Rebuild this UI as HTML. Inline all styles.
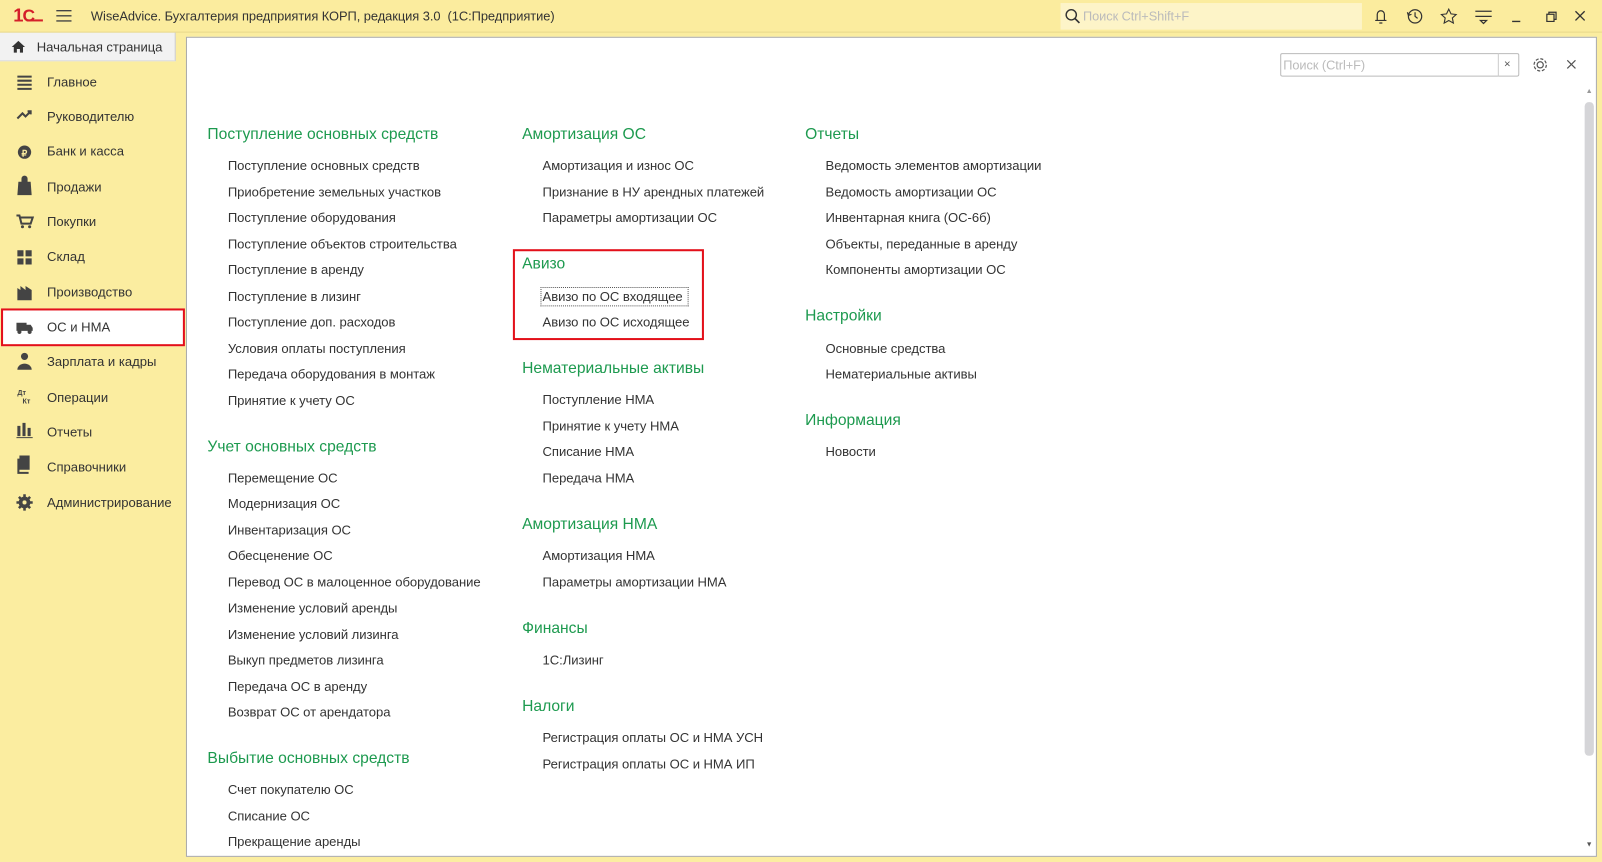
<!DOCTYPE html>
<html><head><meta charset="utf-8"><style>
*{margin:0;padding:0;box-sizing:border-box}
html,body{width:1602px;height:862px;overflow:hidden;background:#fff;font-family:"Liberation Sans",Arial,sans-serif;color:#333}
#w{position:absolute;left:0;top:0;width:1568px;height:844px;transform:scale(1.0217,1.0213);transform-origin:0 0;background:#fbeda0}
.a{position:absolute;white-space:nowrap}
.t{font-size:12.8px;letter-spacing:-0.05px;color:#333;transform:translateY(-50%)}
.h{font-size:15.3px;color:#1d9a4f;transform:translateY(-50%)}
.si{font-size:12.8px;color:#333;transform:translateY(-50%)}
</style></head><body><div id="w">
<div class="a" style="left:0;top:0;width:1568px;height:32px;background:#fbec9e;border-bottom:1px solid #e6d68a"></div>
<div class="a" style="left:13px;top:5px;font:bold 18px 'Liberation Sans';color:#d4202a;letter-spacing:-1px">1<span style="font-size:17px">C</span></div>
<div class="a" style="left:26px;top:19px;width:16px;height:2px;background:#d4202a"></div>
<svg class="a" style="left:55px;top:9px" width="15" height="13"><path d="M0 1.5H15M0 6.5H15M0 11.5H15" stroke="#444" stroke-width="1.3"/></svg>
<div class="a t" style="left:89px;top:16px;font-size:12.6px">WiseAdvice. Бухгалтерия предприятия КОРП, редакция 3.0&nbsp; (1С:Предприятие)</div>
<div class="a" style="left:1038px;top:3px;width:295px;height:26px;background:#fdf4c8"></div>
<svg class="a" style="left:1042px;top:8px" width="16" height="16"><circle cx="6.5" cy="6.5" r="5" fill="none" stroke="#333" stroke-width="1.4"/><path d="M10 10L14.5 14.5" stroke="#333" stroke-width="1.6"/></svg>
<div class="a t" style="left:1060px;top:16px;color:#bbb;font-size:12.5px">Поиск Ctrl+Shift+F</div>
<svg class="a" style="left:1343px;top:7px" width="220" height="18">
<path d="M3 13h11M5 13V7a3.5 3.5 0 0 1 7 0v6M7 15.5h3" fill="none" stroke="#333" stroke-width="1.2"/>
<circle cx="42" cy="9" r="6.5" fill="none" stroke="#333" stroke-width="1.2"/><path d="M42 5v4l2.5 2M34.5 5l1 3 3-1" fill="none" stroke="#333" stroke-width="1.2"/>
<path d="M75 2l2.2 4.6 5 .6-3.7 3.4 1 5-4.5-2.5-4.5 2.5 1-5-3.7-3.4 5-.6z" fill="none" stroke="#333" stroke-width="1.1"/>
<path d="M101 4h16M101 9h16M106 13h6l-3 3z" fill="none" stroke="#333" stroke-width="1.2"/>
<path d="M137 14h8" stroke="#333" stroke-width="1.3"/>
<path d="M171 7h7v7h-7zM173 7V5h7v7h-2" fill="none" stroke="#333" stroke-width="1.2"/>
<path d="M199 4l9 9M208 4l-9 9" stroke="#333" stroke-width="1.3"/>
</svg>
<div class="a" style="left:0;top:32px;width:172px;height:28px;background:#f2f2f2;border-right:1px solid #ccc;border-bottom:1px solid #ddd"></div>
<svg class="a" style="left:11px;top:39px" width="14" height="13"><path d="M7 1L0.5 7H2.5V12.5H5.5V9H8.5V12.5H11.5V7H13.5z" fill="#333"/></svg>
<div class="a t" style="left:36px;top:46px">Начальная страница</div>
<div class="a" style="left:172px;top:32px;width:1396px;height:4px;background:#fbeda0"></div>
<div class="a" style="left:1px;top:302px;width:180px;height:37px;background:#fff;border:2px solid #e3101a"></div>
<svg class="a" style="left:16px;top:72px" width="18" height="440" fill="#444">
<path d="M1 2h14v2H1zM1 6h14v2H1zM1 10h14v2H1zM1 14h14v2H1z"/>
<path d="M1 44l5-5 3 3 5-5M11 37h3v3" fill="none" stroke="#444" stroke-width="2"/>
<circle cx="8" cy="77" r="6.5"/><text x="5" y="81" font-size="9" font-weight="bold" fill="#fbeda0" font-family="Liberation Sans">₽</text>
<path d="M2 106h12l1 13H1zM5 106v-3a3 3 0 0 1 6 0v3" />
<path d="M0 139h3l2 8h9l2-6H4" fill="none" stroke="#444" stroke-width="2"/><circle cx="6" cy="150" r="1.5"/><circle cx="13" cy="150" r="1.5"/>
<path d="M1 173h6v6H1zM9 173h6v6H9zM1 181h6v6H1zM9 181h6v6H9z"/>
<path d="M1 222V210l3 2v-4l5 4v-4l6 4v10z"/>
<path d="M0 244h10v8H0zM10 246h4l2 3v3h-6z"/><circle cx="3" cy="253" r="2"/><circle cx="13" cy="253" r="2"/>
<circle cx="8" cy="277" r="3.5"/><path d="M1 290a7 6 0 0 1 14 0z"/>
<text x="1" y="315" font-size="7" font-family="Liberation Sans" font-weight="bold">Дт</text><text x="6" y="323" font-size="7" font-family="Liberation Sans" font-weight="bold">Кт</text>
<path d="M1 345h3v10H1zM6 342h3v13H6zM11 347h3v8h-3zM0 356h16v1H0z"/>
<path d="M3 374h10v14H3zM1 377h2v13h9v2H1z"/>
<circle cx="8" cy="420" r="4.5" fill="none" stroke="#444" stroke-width="2.5"/><path d="M8 412v16M0 420h16M2.5 414.5l11 11M13.5 414.5l-11 11" stroke="#444" stroke-width="2.5"/><circle cx="8" cy="420" r="2" fill="#fbeda0"/>
</svg>
<div class="a si" style="left:46px;top:80px">Главное</div>
<div class="a si" style="left:46px;top:114px">Руководителю</div>
<div class="a si" style="left:46px;top:148px">Банк и касса</div>
<div class="a si" style="left:46px;top:183px">Продажи</div>
<div class="a si" style="left:46px;top:217px">Покупки</div>
<div class="a si" style="left:46px;top:251px">Склад</div>
<div class="a si" style="left:46px;top:286px">Производство</div>
<div class="a si" style="left:46px;top:320px">ОС и НМА</div>
<div class="a si" style="left:46px;top:354px">Зарплата и кадры</div>
<div class="a si" style="left:46px;top:389px">Операции</div>
<div class="a si" style="left:46px;top:423px">Отчеты</div>
<div class="a si" style="left:46px;top:457px">Справочники</div>
<div class="a si" style="left:46px;top:492px">Администрирование</div>
<div class="a" style="left:182px;top:36px;width:1381px;height:803px;background:#fff;border:1px solid #aaa"></div>
<div class="a" style="left:1253px;top:52px;width:234px;height:23px;border:1px solid #bbb;border-radius:2px;background:#fff"></div>
<div class="a" style="left:1466px;top:52px;width:1px;height:23px;background:#ccc"></div>
<div class="a t" style="left:1256px;top:64px;color:#bbb;font-size:12.5px">Поиск (Ctrl+F)</div>
<div class="a t" style="left:1472px;top:63px;font-size:11px;color:#555">×</div>
<svg class="a" style="left:1499px;top:55px" width="17" height="17"><circle cx="8.5" cy="8.5" r="3" fill="none" stroke="#555" stroke-width="1.2"/><circle cx="8.5" cy="8.5" r="6" fill="none" stroke="#555" stroke-width="1.2" stroke-dasharray="3 1.7"/></svg>
<svg class="a" style="left:1533px;top:58px" width="10" height="10"><path d="M1 1l8 8M9 1l-8 8" stroke="#555" stroke-width="1.2"/></svg>
<div class="a" style="left:1551px;top:100px;width:9px;height:640px;background:#d5d5d8;border-radius:4px"></div>
<div class="a" style="left:1552px;top:86px;font-size:7px;color:#999">▲</div>
<div class="a" style="left:1552px;top:824px;font-size:7px;color:#555">▼</div>
<div class="a" style="left:502px;top:244px;width:187px;height:89px;border:2px solid #e3101a"></div>
<div class="a" style="left:529px;top:281px;width:145px;height:19px;border:1px dotted #555"></div>

<div class="a h" style="left:203px;top:132px">Поступление основных средств</div>
<div class="a t" style="left:223px;top:162px">Поступление основных средств</div>
<div class="a t" style="left:223px;top:188px">Приобретение земельных участков</div>
<div class="a t" style="left:223px;top:213px">Поступление оборудования</div>
<div class="a t" style="left:223px;top:239px">Поступление объектов строительства</div>
<div class="a t" style="left:223px;top:264px">Поступление в аренду</div>
<div class="a t" style="left:223px;top:290px">Поступление в лизинг</div>
<div class="a t" style="left:223px;top:315px">Поступление доп. расходов</div>
<div class="a t" style="left:223px;top:341px">Условия оплаты поступления</div>
<div class="a t" style="left:223px;top:366px">Передача оборудования в монтаж</div>
<div class="a t" style="left:223px;top:392px">Принятие к учету ОС</div>
<div class="a h" style="left:203px;top:438px">Учет основных средств</div>
<div class="a t" style="left:223px;top:468px">Перемещение ОС</div>
<div class="a t" style="left:223px;top:493px">Модернизация ОС</div>
<div class="a t" style="left:223px;top:519px">Инвентаризация ОС</div>
<div class="a t" style="left:223px;top:544px">Обесценение ОС</div>
<div class="a t" style="left:223px;top:570px">Перевод ОС в малоценное оборудование</div>
<div class="a t" style="left:223px;top:595px">Изменение условий аренды</div>
<div class="a t" style="left:223px;top:621px">Изменение условий лизинга</div>
<div class="a t" style="left:223px;top:646px">Выкуп предметов лизинга</div>
<div class="a t" style="left:223px;top:672px">Передача ОС в аренду</div>
<div class="a t" style="left:223px;top:697px">Возврат ОС от арендатора</div>
<div class="a h" style="left:203px;top:743px">Выбытие основных средств</div>
<div class="a t" style="left:223px;top:773px">Счет покупателю ОС</div>
<div class="a t" style="left:223px;top:799px">Списание ОС</div>
<div class="a t" style="left:223px;top:824px">Прекращение аренды</div>

<div class="a h" style="left:511px;top:132px">Амортизация ОС</div>
<div class="a t" style="left:531px;top:162px">Амортизация и износ ОС</div>
<div class="a t" style="left:531px;top:188px">Признание в НУ арендных платежей</div>
<div class="a t" style="left:531px;top:213px">Параметры амортизации ОС</div>
<div class="a h" style="left:511px;top:259px">Авизо</div>
<div class="a t" style="left:531px;top:290px">Авизо по ОС входящее</div>
<div class="a t" style="left:531px;top:315px">Авизо по ОС исходящее</div>
<div class="a h" style="left:511px;top:361px">Нематериальные активы</div>
<div class="a t" style="left:531px;top:391px">Поступление НМА</div>
<div class="a t" style="left:531px;top:417px">Принятие к учету НМА</div>
<div class="a t" style="left:531px;top:442px">Списание НМА</div>
<div class="a t" style="left:531px;top:468px">Передача НМА</div>
<div class="a h" style="left:511px;top:514px">Амортизация НМА</div>
<div class="a t" style="left:531px;top:544px">Амортизация НМА</div>
<div class="a t" style="left:531px;top:570px">Параметры амортизации НМА</div>
<div class="a h" style="left:511px;top:616px">Финансы</div>
<div class="a t" style="left:531px;top:646px">1С:Лизинг</div>
<div class="a h" style="left:511px;top:692px">Налоги</div>
<div class="a t" style="left:531px;top:722px">Регистрация оплаты ОС и НМА УСН</div>
<div class="a t" style="left:531px;top:748px">Регистрация оплаты ОС и НМА ИП</div>

<div class="a h" style="left:788px;top:132px">Отчеты</div>
<div class="a t" style="left:808px;top:162px">Ведомость элементов амортизации</div>
<div class="a t" style="left:808px;top:188px">Ведомость амортизации ОС</div>
<div class="a t" style="left:808px;top:213px">Инвентарная книга (ОС-6б)</div>
<div class="a t" style="left:808px;top:239px">Объекты, переданные в аренду</div>
<div class="a t" style="left:808px;top:264px">Компоненты амортизации ОС</div>
<div class="a h" style="left:788px;top:310px">Настройки</div>
<div class="a t" style="left:808px;top:341px">Основные средства</div>
<div class="a t" style="left:808px;top:366px">Нематериальные активы</div>
<div class="a h" style="left:788px;top:412px">Информация</div>
<div class="a t" style="left:808px;top:442px">Новости</div>
</div></body></html>
